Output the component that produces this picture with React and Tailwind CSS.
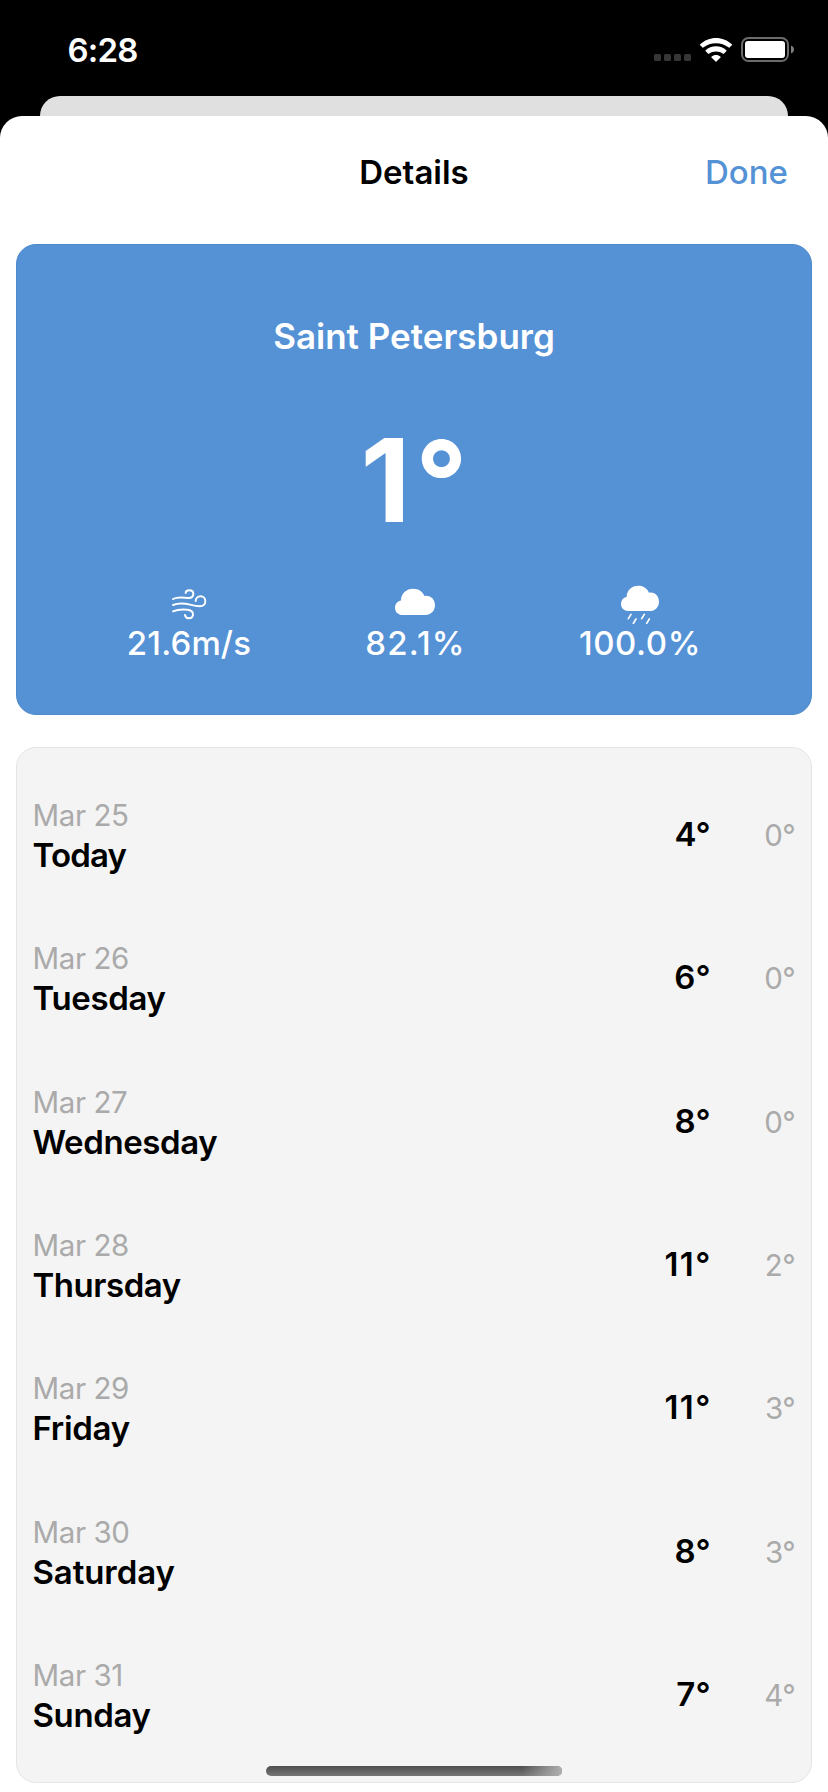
const days = [
  { date: 'Mar 25', name: 'Today', high: '4', low: '0', tracking: 'tracking-[-0.8px]' },
  { date: 'Mar 26', name: 'Tuesday', high: '6', low: '0', tracking: 'tracking-[-0.35px]' },
  { date: 'Mar 27', name: 'Wednesday', high: '8', low: '0', tracking: 'tracking-[-0.4px]' },
  { date: 'Mar 28', name: 'Thursday', high: '11', low: '2', tracking: 'tracking-[-0.45px]' },
  { date: 'Mar 29', name: 'Friday', high: '11', low: '3', tracking: 'tracking-[-0.3px]' },
  { date: 'Mar 30', name: 'Saturday', high: '8', low: '3', tracking: 'tracking-[-0.1px]' },
  { date: 'Mar 31', name: 'Sunday', high: '7', low: '4', tracking: 'tracking-[-0.35px]' },
];

const CLOUD =
  'M22 76C9 76 0 67 0 55C0 44 7 36 17 34C17 14 32 0 52 0C67 0 79 8 84 21C102 18 114 32 114 48C114 64 102 76 87 76Z';

function WindIcon() {
  return (
    <svg className="size-10" viewBox="207 69 120 120" fill="none" stroke="currentColor" strokeWidth="5.8" strokeLinecap="round">
      <path d="M219 117C235 109 250 113 264 114C274 115 280 110 280 102C280 95 275 91 268 91C261 91 257 95 257 99" />
      <path d="M219 135C240 127 255 130 270 134C285 138 292 139 300 139C310 139 316 132 316 124C316 115 310 109 302 109C293 109 287 115 287 123" />
      <path d="M219 154C235 147 250 148 262 149C273 150 279 156 279 163C279 170 274 175 267 175C260 175 256 171 255 165" />
    </svg>
  );
}

function CloudIcon() {
  return (
    <svg className="size-10 overflow-visible" viewBox="882 69 120 120" fill="currentColor">
      <path transform="translate(885 86) scale(1.053 1.04)" d={CLOUD} />
    </svg>
  );
}

function RainIcon() {
  return (
    <svg className="size-10 overflow-visible" viewBox="597 69 120 120" fill="currentColor">
      <path transform="translate(603 77)" d={CLOUD} />
      <path d="M633 163L625 176M648 177L640 190M673 163L665 176M688 177L680 190" stroke="currentColor" strokeWidth="5" strokeLinecap="round" />
    </svg>
  );
}

function StatusBar() {
  return (
    <div className="flex h-24 items-start justify-between pl-[67.5px] pr-[34px] pt-[29.5px] text-white">
      <span className="text-[33px] leading-10 font-semibold tracking-[-0.8px]">6:28</span>
      <div className="flex h-10 items-center">
        <div className="mt-4 flex gap-[3px]">
          {[0, 1, 2, 3].map((i) => (
            <span key={i} className="size-[7px] rounded-[1.5px] bg-[#363636]" />
          ))}
        </div>
        <svg className="ml-[9.5px] h-6 w-8" viewBox="0 0 96 72" fill="currentColor">
          <path d="M48 0C66 0 83 7 95.500 19Q96.500 20.500 95.500 21.500L88.500 28.500Q87.500 29.500 86.200 28.500C75.500 20 62 15.500 48 15.500S20.500 20 9.800 28.500Q8.500 29.500 7.500 28.500L.5 21.500Q-.5 20.500 .5 19C13 7 30 0 48 0Z" />
          <path d="M48 25C60 25 71 29.500 79 37Q80 38.300 79 39.500L71.500 47Q70.300 48 69 47C63 42.500 56.500 40.500 48 40.500S33 42.500 27 47Q25.700 48 24.500 47L17 39.500Q16 38.300 17 37C25 29.500 36 25 48 25Z" />
          <path d="M48 51C53 51 58 53 61.500 56Q62.500 57.200 61.500 58.500L49.300 70.500Q48 71.500 46.700 70.500L34.500 58.500Q33.500 57.200 34.500 56C38 53 43 51 48 51Z" />
        </svg>
        <svg className="ml-[9px] h-[25px] w-[53px]" viewBox="0 0 53 25" fill="none">
          <rect x="1" y="1" width="46" height="23" rx="6.500" stroke="#6b6b6b" strokeWidth="2" />
          <rect x="4" y="4" width="40" height="17" rx="3" fill="white" />
          <path d="M50 8.500C51.800 9.200 53 10.700 53 12.500S51.800 15.800 50 16.500Z" fill="#808080" />
        </svg>
      </div>
    </div>
  );
}

function Stat({ icon, children }) {
  return (
    <div className="flex flex-col items-center">
      {icon}
      {children}
    </div>
  );
}

function CurrentWeather() {
  return (
    <section className="mx-4 flex h-[471px] flex-col items-center rounded-[20px] border border-[#4f8acb] bg-[#5491d5] pt-[69px] text-white">
      <h2 className="text-[35px] leading-[44px] font-semibold">Saint Petersburg</h2>
      <p className="mt-[62px] flex text-[116px] leading-[120px] font-bold">
        1<span className="relative top-px ml-[5px] text-[113px]">°</span>
      </p>
      <div className="mt-[43px] grid w-[675px] grid-cols-3 text-[33px] leading-10 font-medium">
        <Stat icon={<WindIcon />}>
          <span className="tracking-[0.15px]">21.6m/s</span>
        </Stat>
        <Stat icon={<CloudIcon />}>
          <span className="-mr-[3px] tracking-[1.2px]">82.1%</span>
        </Stat>
        <Stat icon={<RainIcon />}>
          <span className="-mr-[2px] tracking-[0.6px]">100.0%</span>
        </Stat>
      </div>
    </section>
  );
}

function DayRow({ day }) {
  return (
    <li className="flex flex-1 items-center justify-between">
      <div className="flex flex-col">
        <span className="text-[29.5px] leading-10 tracking-[-0.4px] text-[#aaaaaa]">{day.date}</span>
        <span className={`text-[33px] leading-10 font-semibold text-black ${day.tracking}`}>{day.name}</span>
      </div>
      <div className="flex items-baseline pb-px leading-10">
        <span className={`text-[33px] font-semibold text-black ${day.high === '11' ? '-mr-[1.2px] tracking-[1.4px]' : ''}`}>
          {day.high}°
        </span>
        <span className="w-[84.5px] text-right text-[29.5px] tracking-[-0.6px] text-[#aaaaaa]">{day.low}°</span>
      </div>
    </li>
  );
}

export default function App() {
  return (
    <div className="relative flex h-[1792px] w-[828px] flex-col overflow-hidden bg-black font-['Inter',sans-serif]">
      <StatusBar />
      <div className="mx-10 h-5 shrink-0 rounded-t-[20px] bg-[#e0e0e0]" />
      <main className="flex flex-1 flex-col rounded-t-[22px] bg-white">
        <header className="mb-4 grid h-28 grid-cols-3 items-center px-10 text-[33px] leading-10">
          <h1 className="col-start-2 text-center font-semibold text-black">Details</h1>
          <button className="text-right font-medium text-[#5491d5]">Done</button>
        </header>
        <CurrentWeather />
        <ul className="mx-4 mt-8 flex h-[1036px] flex-col rounded-[20px] border border-[#e5e5e5] bg-[#f4f4f4] py-[15.5px] pr-4 pl-[15.5px]">
          {days.map((day) => (
            <DayRow key={day.date} day={day} />
          ))}
        </ul>
      </main>
      <div className="absolute top-[1766px] left-[266px] h-[10px] w-[296px] overflow-hidden rounded-full bg-linear-to-b from-[#4e4e4e] to-[#767676]">
        <div className="ml-auto h-full w-10 bg-linear-to-r from-transparent to-[#b0b0b0]" />
      </div>
    </div>
  );
}
